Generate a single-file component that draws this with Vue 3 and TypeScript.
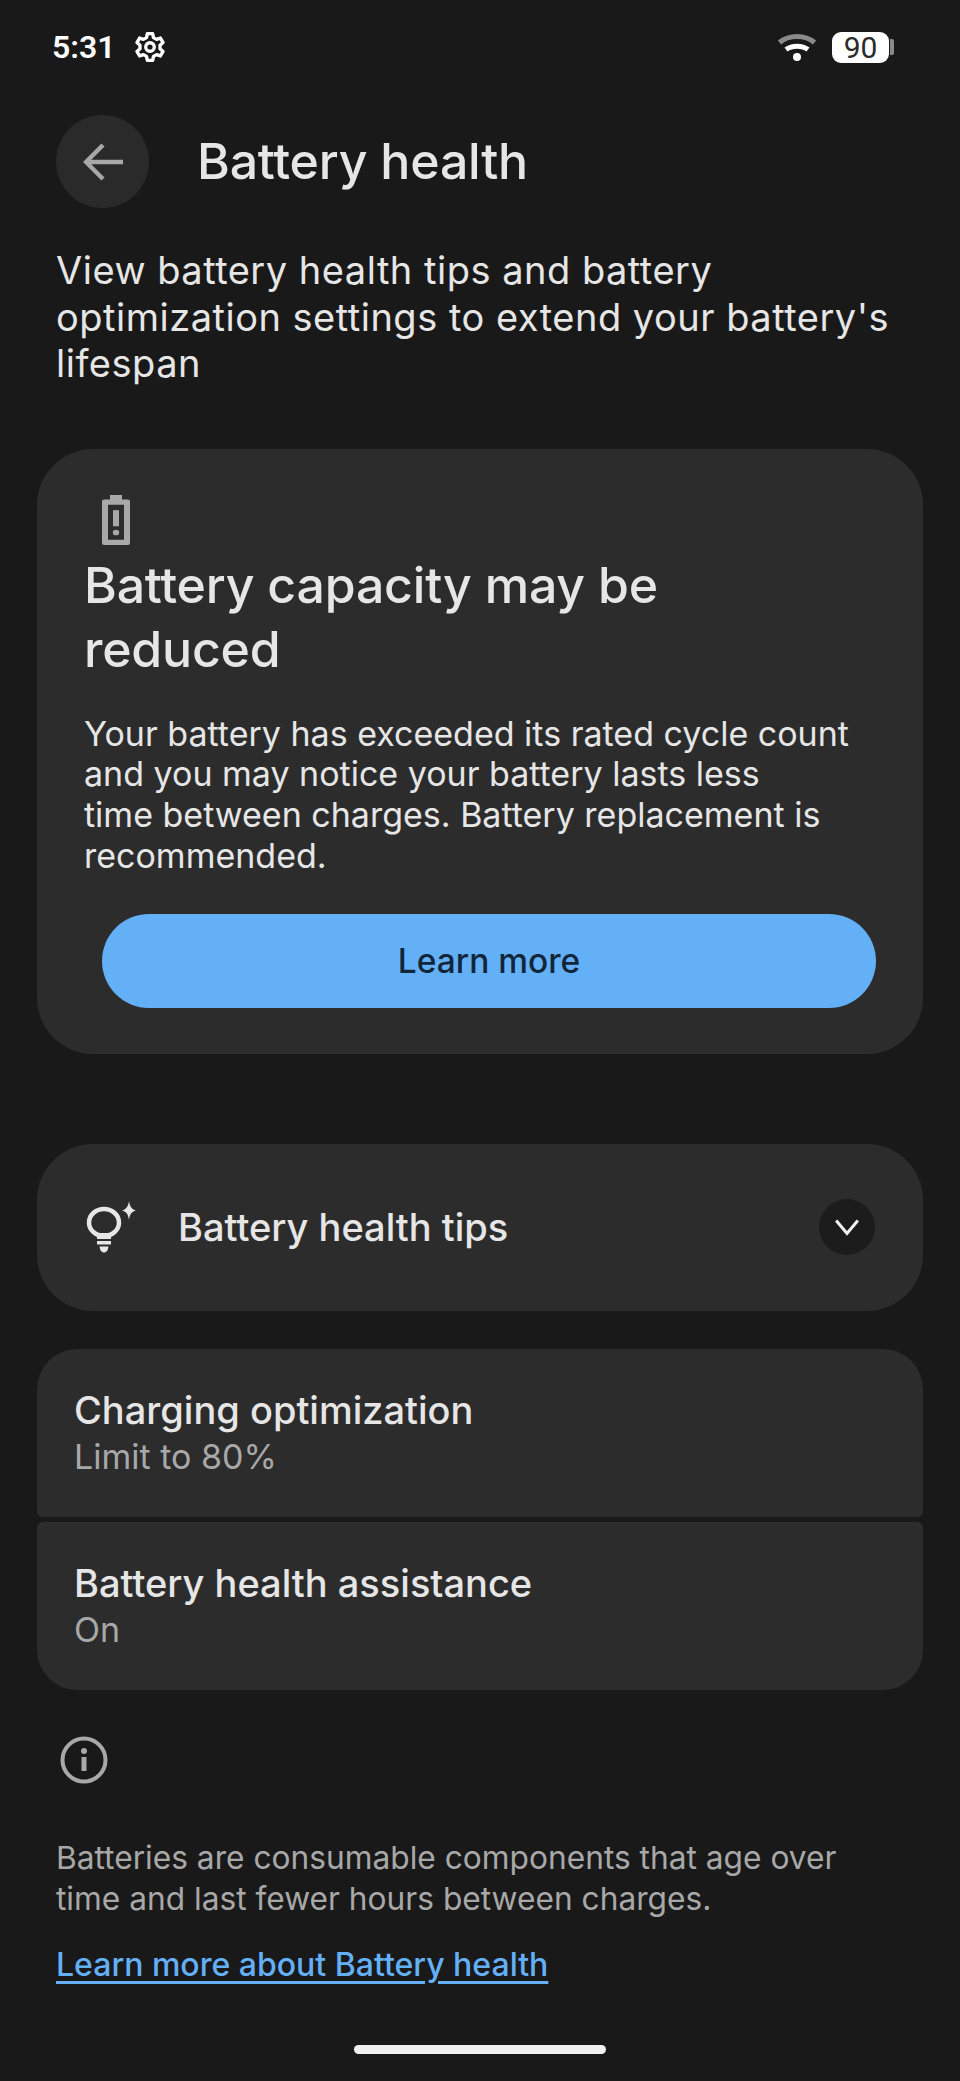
<script setup lang="ts">
const settings = [
  { title: 'Charging optimization', sub: 'Limit to 80%' },
  { title: 'Battery health assistance', sub: 'On' }
]
</script>

<template>
  <div class="screen">
    <div class="status">
      <span class="time">5:31</span>
      <svg class="gear" viewBox="0 0 24 24" width="32" height="32">
        <path fill="none" stroke="#fff" stroke-width="2.500" stroke-linejoin="round" d="M10 2h4l.6 3 2.300 1.300 2.900-1 2 3.400-2.300 2v2.600l2.300 2-2 3.400-2.900-1-2.300 1.300-.6 3h-4l-.6-3-2.300-1.300-2.900 1-2-3.400 2.300-2v-2.600l-2.300-2 2-3.400 2.900 1 2.300-1.300z" />
        <circle cx="12" cy="12" r="3.200" fill="none" stroke="#fff" stroke-width="2.500" />
      </svg>
      <div class="status-right">
        <svg class="wifi" viewBox="0 0 40 32" width="40" height="32">
          <path fill="none" stroke="#8a8a8a" stroke-width="5" d="M2.500 11.500C12 3.500 28 3.500 37.500 11.500" />
          <path fill="none" stroke="#fff" stroke-width="5" d="M9 18.500C15 14 25 14 31 18.500" />
          <circle cx="20" cy="26" r="4" fill="#fff" />
        </svg>
        <div class="batt"><span>90</span></div>
        <div class="batt-tip"></div>
      </div>
    </div>

    <div class="header">
      <div class="back">
        <svg viewBox="0 0 40 40" width="40" height="40">
          <path fill="none" stroke="#a8a8a8" stroke-width="4.400" d="M40 20H3M20 3 3 20l17 17" />
        </svg>
      </div>
      <h1>Battery health</h1>
    </div>

    <p class="intro">View battery health tips and battery optimization settings to extend your battery's lifespan</p>

    <section class="card warn">
      <svg class="batt-icon" viewBox="0 0 28 56" width="28" height="50" preserveAspectRatio="none">
        <path fill="#a8a8a8" fill-rule="evenodd" d="M8 0h12v5h6a2 2 0 0 1 2 2v47a2 2 0 0 1-2 2H2a2 2 0 0 1-2-2V7a2 2 0 0 1 2-2h6zM6 11v39h16V11z" />
        <rect x="11" y="17" width="6" height="18" fill="#a8a8a8" />
        <circle cx="14" cy="42" r="3.200" fill="#a8a8a8" />
      </svg>
      <h2>Battery capacity may be reduced</h2>
      <p>Your battery has exceeded its rated cycle count and you may notice your battery lasts less<br />time between charges. Battery replacement is recommended.</p>
      <button class="learn">Learn more</button>
    </section>

    <section class="card tips">
      <svg class="bulb" viewBox="0 0 56 56" width="56" height="56">
        <ellipse cx="20" cy="23.500" rx="15" ry="13.500" fill="none" stroke="#e6e6e6" stroke-width="4.500" />
        <path fill="#e6e6e6" d="M13 34h14v6H13zM13 42h14v3.500H13zM15.500 47.500h9c-.5 4-2 6-4.500 6s-4-2-4.500-6z" />
        <path fill="#e6e6e6" d="M45 2c.8 5.500 2.500 8 7 9.500-4.500 1-6.200 4-7 9.500-.8-5.500-2.500-8.500-7-9.500 4.500-1.500 6.200-4 7-9.500z" />
      </svg>
      <span class="tips-label">Battery health tips</span>
      <div class="chevron">
        <svg viewBox="0 0 24 24" width="26" height="26">
          <path fill="none" stroke="#f0f0f0" stroke-width="2.800" d="M2 6l10 12L22 6" />
        </svg>
      </div>
    </section>

    <div class="group">
      <div v-for="item in settings" :key="item.title" class="row">
        <div class="row-title">{{ item.title }}</div>
        <div class="row-sub">{{ item.sub }}</div>
      </div>
    </div>

    <svg class="info" viewBox="0 0 48 48" width="48" height="48">
      <circle cx="24" cy="24" r="21.500" fill="none" stroke="#a8a8a8" stroke-width="4" />
      <rect x="21.500" y="21" width="5" height="14" fill="#a8a8a8" />
      <circle cx="24" cy="15" r="3" fill="#a8a8a8" />
    </svg>
    <p class="foot">Batteries are consumable components that age over time and last fewer hours between charges.</p>
    <a class="link">Learn more about Battery health</a>

    <div class="home"></div>
  </div>
</template>

<style>
html, body {
  background: #191919;
}
</style>

<style scoped>
.screen {
  width: 960px;
  height: 2081px;
  background: #191919;
  color: #e6e6e6;
  font-family: Inter, "Open Sans", sans-serif;
  display: flex;
  flex-direction: column;
  overflow: hidden;
}
.status {
  display: flex;
  align-items: center;
  height: 32px;
  margin-top: 31px;
  padding: 0 66px 0 52px;
}
.time {
  font-size: 32px;
  font-weight: 600;
  color: #fff;
  font-family: Roboto, sans-serif;
}
.gear {
  margin-left: 18px;
}
.status-right {
  margin-left: auto;
  display: flex;
  align-items: center;
}
.wifi {
  margin-right: 3px;
}
.batt {
  width: 57px;
  height: 31px;
  margin-left: 12px;
  background: #fff;
  border-radius: 9px;
  color: #2a2a2a;
  font-family: Roboto, sans-serif;
  font-size: 30px;
  font-weight: 400;
  line-height: 31px;
  text-align: center;
}
.batt-tip {
  width: 4px;
  height: 16px;
  margin-left: 1px;
  background: #8a8a8a;
  border-radius: 0 2px 2px 0;
}
.header {
  display: flex;
  align-items: center;
  margin-top: 52px;
  padding-left: 56px;
}
.back {
  width: 93px;
  height: 93px;
  border-radius: 50%;
  background: #2a2a2a;
  display: flex;
  align-items: center;
  justify-content: center;
}
h1 {
  margin: -2px 0 0 48px;
  font-size: 50px;
  font-weight: 500;
  letter-spacing: -0.2px;
}
.intro {
  margin: 39px 60px 0 56px;
  font-size: 38px;
  line-height: 46.500px;
  letter-spacing: 0.5px;
}
.card {
  margin: 0 37px;
  background: #2c2c2c;
}
.warn {
  flex: none;
  margin-top: 62px;
  height: 605px;
  box-sizing: border-box;
  padding: 46px 40px 0 47px;
  border-radius: 56px;
  display: flex;
  flex-direction: column;
  align-items: flex-start;
}
.batt-icon {
  margin-left: 18px;
}
.warn h2 {
  margin: 8px 0 0;
  width: 680px;
  font-size: 50px;
  line-height: 64px;
  font-weight: 500;
  letter-spacing: -0.2px;
}
.warn p {
  margin: 33px 0 0;
  font-size: 34px;
  line-height: 40.700px;
}
.learn {
  margin: 38px 0 0 18px;
  width: 774px;
  height: 94px;
  border: 0;
  border-radius: 47px;
  background: #64b0f6;
  color: #12263a;
  font: 500 33.500px Inter, sans-serif;
}
.tips {
  flex: none;
  margin-top: 90px;
  height: 167px;
  box-sizing: border-box;
  border-radius: 56px;
  display: flex;
  align-items: center;
  padding: 0 48px 0 47px;
}
.tips-label {
  margin-left: 38px;
  font-size: 38px;
  font-weight: 500;
}
.chevron {
  margin-left: auto;
  width: 56px;
  height: 56px;
  border-radius: 50%;
  background: #1c1c1c;
  display: flex;
  align-items: center;
  justify-content: center;
}
.group {
  margin: 38px 37px 0;
  display: flex;
  flex-direction: column;
  gap: 5px;
}
.row {
  height: 168px;
  box-sizing: border-box;
  padding: 38px 37px 0;
  background: #2c2c2c;
  border-radius: 6px;
}
.row:first-child {
  border-radius: 40px 40px 6px 6px;
}
.row:last-child {
  border-radius: 6px 6px 40px 40px;
}
.row-title {
  font-size: 38px;
  font-weight: 500;
  line-height: 47px;
}
.row-sub {
  font-size: 34px;
  line-height: 46px;
  color: #a8a8a8;
}
.info {
  flex: none;
  margin: 46px 0 0 60px;
}
.foot {
  margin: 53px 100px 0 56px;
  font-size: 31.700px;
  line-height: 41px;
  color: #a8a8a8;
}
.link {
  margin: 26px 0 0 56px;
  font-size: 32px;
  font-weight: 500;
  color: #64b0f6;
  text-decoration: underline;
  text-decoration-thickness: 3px;
  text-underline-offset: 5px;
  align-self: flex-start;
}
.home {
  margin: auto auto 27px;
  width: 252px;
  height: 9px;
  border-radius: 5px;
  background: #f0f0f0;
}
</style>
